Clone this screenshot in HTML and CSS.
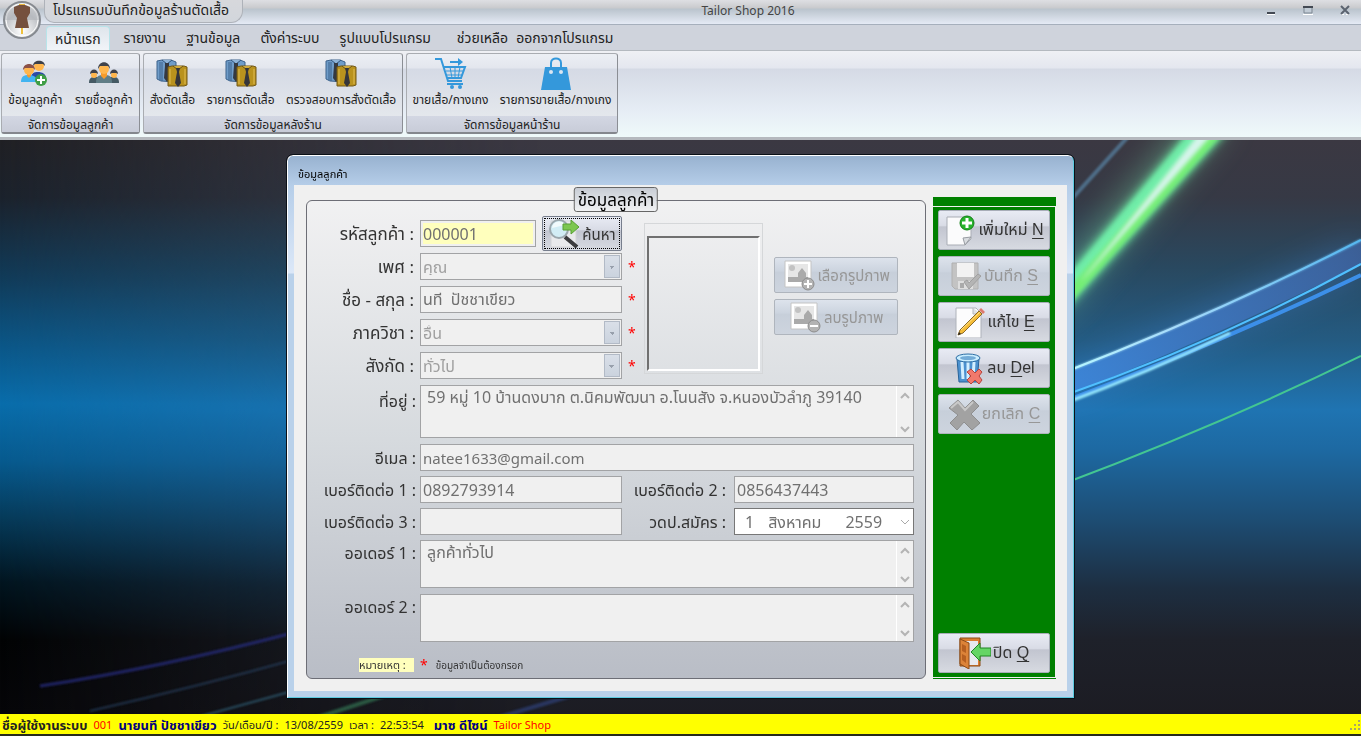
FILE: index.html
```html
<!DOCTYPE html>
<html lang="th">
<head>
<meta charset="utf-8">
<title>Tailor Shop 2016</title>
<link rel="stylesheet" href="styles.css">
</head>
<body>
<svg class="defs" aria-hidden="true">
  <symbol id="shirts" viewBox="0 0 32 32">
    <path d="M1 3l5-1h9l5 2v20l-15-1-4-2z" fill="#6f9cc9" stroke="#3c628c"/>
    <path d="M4 4v18M6 4v19" stroke="#3c628c"/>
    <path d="M6 2l5 4 5-4" fill="#8fb4d8" stroke="#31557c"/>
    <path d="M9 5h4v3l1 12-3 4-3-4 1-12z" fill="#353941"/>
    <path d="M12 9l4-1h12l3 1v18l-3 1H12z" fill="#b9921d" stroke="#725817"/>
    <path d="M14 11v15M29 11v15" stroke="#e0bc55"/>
    <path d="M17 8l5 4 5-4" fill="#d0aa3c" stroke="#6c5414"/>
    <path d="M20 10h4l-1 4 2 11-3 4-3-4 2-11z" fill="#35353a"/>
  </symbol>
  <symbol id="photo" viewBox="0 0 34 34">
    <path d="M3 3h26v26H3z" fill="#fff" stroke="#c4c4c4"/>
    <path d="M6 6h20v17H6z" fill="#e6e6e6"/><path d="M6 19h20v5H6z" fill="#aaa"/>
    <circle cx="10" cy="10" r="3" fill="#c2c2c2"/>
    <path d="M20 10l4 5v4h-3v3h-2v-3h-3v-4z" fill="#aaa"/>
    <circle cx="26" cy="26" r="6" fill="#b3b3b3" stroke="#8d8d8d"/>
  </symbol>
  <symbol id="up" viewBox="0 0 10 8"><path d="M1 6l4-4 4 4" fill="none" stroke="#b4b4b4" stroke-width="2"/></symbol>
  <symbol id="down" viewBox="0 0 10 8"><path d="M1 2l4 4 4-4" fill="none" stroke="#b4b4b4" stroke-width="2"/></symbol>
</svg>

<header class="titlebar">
  <span class="orb">
    <svg width="40" height="40" viewBox="0 0 40 40">
      <defs><radialGradient id="orbFill" cx=".5" cy=".8" r=".8"><stop offset="0" stop-color="#fff"/><stop offset=".6" stop-color="#c4c6ca"/><stop offset="1" stop-color="#efefef"/></radialGradient></defs>
      <circle cx="20" cy="20" r="18" fill="url(#orbFill)" stroke="#868a90" stroke-width="2"/>
      <circle cx="20" cy="20" r="16" fill="none" stroke="#fff"/>
      <path d="M3 20a17 15 0 0 1 34 0z" fill="#a9adb3" opacity=".5"/>
      <path d="M20 26v8" stroke="#efc13c" stroke-width="2"/>
      <path d="M17 4h6v2h-6z" fill="#e6b53c"/>
      <path d="M17 5h6l5 2v6l-3 5 2 10H13l2-10-3-5V7z" fill="#75503e"/>
    </svg>
  </span>
  <span class="app-name">โปรแกรมบันทึกข้อมูลร้านตัดเสื้อ</span>
  <h1 class="window-title">Tailor Shop 2016</h1>
  <div class="window-buttons">
    <button type="button" aria-label="Minimize"><svg width="10" height="12" viewBox="0 0 10 12"><path d="M1 10h8" stroke="#434953" stroke-width="2"/><path d="M1 11.500h8" stroke="#fff"/></svg></button>
    <button type="button" aria-label="Maximize"><svg width="10" height="12" viewBox="0 0 10 12"><path d="M1 4h8v6H1z" fill="#c2ccd6" stroke="#7c8792"/><path d="M0 4h10" stroke="#434953" stroke-width="2"/><path d="M0 11.500h10" stroke="#fff"/></svg></button>
    <button type="button" aria-label="Close"><svg width="10" height="12" viewBox="0 0 10 12"><path d="M1 11.500h3m2 0h3" stroke="#fff"/><path d="M1 3l8 8M9 3l-8 8" stroke="#5b636f" stroke-width="2"/></svg></button>
  </div>
</header>

<nav class="tabs">
  <a href="#home" class="tab active">หน้าแรก</a>
  <a href="#report" class="tab">รายงาน</a>
  <a href="#data" class="tab">ฐานข้อมูล</a>
  <a href="#setup" class="tab">ตั้งค่าระบบ</a>
  <a href="#style" class="tab">รูปแบบโปรแกรม</a>
  <a href="#help" class="tab help">ช่วยเหลือ</a>
  <a href="#exit" class="tab exit">ออกจากโปรแกรม</a>
</nav>

<section class="ribbon">
  <div class="group customers">
    <div class="tools">
      <button type="button" class="tool">
        <svg width="32" height="32" viewBox="0 0 32 32">
          <path d="M12 20c0-5 3-6 7-6s8 2 8 6z" fill="#2b4aa5"/><circle cx="20" cy="8" r="5" fill="#ffb64d"/><path d="M14 8c0-7 12-7 12 0l-2-2h-8z" fill="#3d4048"/>
          <path d="M2 24c0-6 3-7 8-7s8 2 8 7z" fill="#42b4f0"/><path d="M8 14h4v4l-2 2-2-2z" fill="#f59b2c"/><circle cx="10" cy="12" r="5" fill="#ffb64d"/><path d="M4 12c0-8 12-8 12 0l-2-2H6z" fill="#8b5148"/>
          <circle cx="22" cy="22" r="6" fill="#3f9e45"/><path d="M22 18v8m-4-4h8" stroke="#fff" stroke-width="2"/>
        </svg>
        <span>ข้อมูลลูกค้า</span>
      </button>
      <button type="button" class="tool">
        <svg width="32" height="32" viewBox="0 0 32 32">
          <path d="M1 25c0-5 2-6 6-6h18c4 0 6 1 6 6z" fill="#455a64"/><path d="M8 25c0-7 2-8 8-8s8 1 8 8z" fill="#607d86"/>
          <path d="M13 14h6v4l-3 3-3-3z" fill="#f59b2c"/><circle cx="16" cy="11" r="5" fill="#ffb64d"/><path d="M10 11c0-9 12-9 12 0l-2-3h-8z" fill="#41434a"/>
          <circle cx="6" cy="17" r="3" fill="#ffb64d"/><path d="M2 16c0-6 8-6 8 0l-2-1H4z" fill="#41434a"/><circle cx="26" cy="17" r="3" fill="#ffb64d"/><path d="M22 16c0-6 8-6 8 0l-2-1h-4z" fill="#41434a"/>
        </svg>
        <span>รายชื่อลูกค้า</span>
      </button>
    </div>
    <div class="caption">จัดการข้อมูลลูกค้า</div>
  </div>
  <div class="group backshop">
    <div class="tools">
      <button type="button" class="tool"><svg width="32" height="32"><use href="#shirts"/></svg><span>สั่งตัดเสื้อ</span></button>
      <button type="button" class="tool"><svg width="32" height="32"><use href="#shirts"/></svg><span>รายการตัดเสื้อ</span></button>
      <button type="button" class="tool"><svg width="32" height="32"><use href="#shirts"/></svg><span>ตรวจสอบการสั่งตัดเสื้อ</span></button>
    </div>
    <div class="caption">จัดการข้อมูลหลังร้าน</div>
  </div>
  <div class="group frontshop">
    <div class="tools">
      <button type="button" class="tool">
        <svg width="34" height="34" viewBox="0 0 34 34" fill="none" stroke="#3498db" stroke-width="2">
          <path d="M1 2h6l7 22h14"/><path d="M9 10h22l-4 11H13"/><path d="M12 14h17M12 18h16M16 10l2 11M21 10v11M26 10l-2 11" stroke-width="1"/><path d="M16 5h10" /><path d="M24 1l5 4-5 4z" fill="#3498db" stroke="none"/><path d="M13 27h16" /><circle cx="18" cy="30" r="2" fill="#3498db" stroke="none"/><circle cx="26" cy="30" r="2" fill="#3498db" stroke="none"/>
        </svg>
        <span>ขายเสื้อ/กางเกง</span>
      </button>
      <button type="button" class="tool">
        <svg width="34" height="34" viewBox="0 0 34 34"><path d="M6 10h22l4 23H2z" fill="#3498db"/><path d="M12 10V6c0-6 10-6 10 0v4" fill="none" stroke="#3498db" stroke-width="2"/><circle cx="12" cy="15" r="2" fill="#dbe6f2"/><circle cx="22" cy="15" r="2" fill="#dbe6f2"/></svg>
        <span>รายการขายเสื้อ/กางเกง</span>
      </button>
    </div>
    <div class="caption">จัดการข้อมูลหน้าร้าน</div>
  </div>
</section>

<main class="workspace">
  <svg class="wallpaper" viewBox="0 0 1361 574" preserveAspectRatio="none" aria-hidden="true">
    <defs>
      <linearGradient id="left" x2="0" y2="1"><stop offset="0" stop-color="#202024"/><stop offset=".1" stop-color="#1b222c"/><stop offset=".24" stop-color="#113b59"/><stop offset=".36" stop-color="#0b5788"/><stop offset=".46" stop-color="#096dab"/><stop offset=".56" stop-color="#075a8e"/><stop offset=".66" stop-color="#063a59"/><stop offset=".77" stop-color="#021520"/><stop offset=".87" stop-color="#020304"/><stop offset="1" stop-color="#060609"/></linearGradient>
      <linearGradient id="right" x2="0" y2="1"><stop offset="0" stop-color="#3b3842"/><stop offset=".1" stop-color="#363945"/><stop offset=".22" stop-color="#29485f"/><stop offset=".35" stop-color="#245b82"/><stop offset=".47" stop-color="#1f74b2"/><stop offset=".54" stop-color="#1d69a2"/><stop offset=".66" stop-color="#1d4d74"/><stop offset=".78" stop-color="#1d2e41"/><stop offset=".87" stop-color="#1e212a"/><stop offset="1" stop-color="#1c1c23"/></linearGradient>
      <linearGradient id="fade"><stop offset="0" stop-color="#000"/><stop offset=".22" stop-color="#aaa"/><stop offset=".4" stop-color="#fff"/></linearGradient>
      <mask id="toRight"><rect width="1361" height="574" fill="url(#fade)"/></mask>
      <linearGradient id="blueLine" gradientUnits="userSpaceOnUse" x1="1074" y1="0" x2="1361" y2="0"><stop offset="0" stop-color="#b6f6ff"/><stop offset=".35" stop-color="#a8dcfb"/><stop offset="1" stop-color="#55b7f0"/></linearGradient>
      <linearGradient id="band" gradientUnits="userSpaceOnUse" x1="1074" y1="0" x2="1361" y2="0"><stop offset="0" stop-color="#4189e0"/><stop offset="1" stop-color="#3f64a2"/></linearGradient>
      <filter id="soft" x="-20%" y="-20%" width="140%" height="140%"><feGaussianBlur stdDeviation="5"/></filter>
      <filter id="wide" x="-30%" y="-30%" width="160%" height="160%"><feGaussianBlur stdDeviation="16"/></filter>
      <filter id="fine" x="-10%" y="-10%" width="120%" height="120%"><feGaussianBlur stdDeviation="1"/></filter>
      <filter id="mid" x="-10%" y="-10%" width="120%" height="120%"><feGaussianBlur stdDeviation="2"/></filter>
    </defs>
    <rect width="1361" height="574" fill="url(#left)"/>
    <rect width="1361" height="574" fill="url(#right)" mask="url(#toRight)"/>
    <path d="M1050 140L1190-20h40L1050 185z" fill="#6bb48f" opacity=".6" filter="url(#wide)"/>
    <path d="M1134-10l-74 82" stroke="#5f93b8" stroke-width="4" opacity=".6" filter="url(#fine)"/>
    <path d="M1060 144L1190-10h38L1060 176z" fill="#6be9a2" filter="url(#soft)"/>
    <path d="M1060 147L1192-10h16L1060 166z" fill="#72f0ab" opacity=".8" filter="url(#mid)"/>
    <path d="M1060 158L1208-10h18L1060 174z" fill="#74ee74" filter="url(#mid)"/>
    <path d="M1080 142L1202-10h14l-128 144z" fill="#d6f4ec" filter="url(#mid)"/>
    <path d="M1060 234L1361 100v36L1060 266z" fill="#468bea" opacity=".3" filter="url(#wide)"/>
    <path d="M1060 234Q1220 172 1361 100v24Q1220 195 1060 258z" fill="url(#band)" opacity=".8"/>
    <path d="M1060 234Q1220 172 1361 100" fill="none" stroke="url(#blueLine)" stroke-width="2" filter="url(#fine)"/>
    <path d="M1060 234Q1220 172 1361 100" fill="none" stroke="url(#blueLine)" stroke-width="2"/>
    <path d="M1060 257Q1220 201 1361 124" fill="none" stroke="#4fc0ff" stroke-width="2"/>
    <path d="M1060 263Q1220 203 1361 135" fill="none" stroke="#3c8fe9" stroke-width="4"/>
    <path d="M1060 265Q1150 232 1230 193" fill="none" stroke="#9beeff" stroke-width="3" filter="url(#fine)"/>
    <path d="M1060 345Q1220 285 1361 216" fill="none" stroke="#43c692" stroke-width="2"/>
    <g fill="none" filter="url(#fine)"><path d="M40 546Q160 528 300 491" stroke="#29308a" stroke-width="3" opacity=".7"/><path d="M90 571Q200 546 300 518" stroke="#2a4565" stroke-width="2" opacity=".7"/><path d="M180 582L300 549" stroke="#356780" stroke-width="2" opacity=".7"/><path d="M310 580L420 544" stroke="#327452" stroke-width="4" opacity=".7"/><path d="M490 580L610 544" stroke="#31498a" stroke-width="4" opacity=".6"/></g>
  </svg>

  <section class="dialog">
    <h2 class="dialog-title">ข้อมูลลูกค้า</h2>
    <div class="dialog-body">
      <form class="groupbox">
        <h3 class="legend">ข้อมูลลูกค้า</h3>
        <div class="top">
          <div class="rows">
            <div class="row"><label for="code">รหัสลูกค้า :</label><input id="code" class="code" value="000001"><button type="button" class="btn search">
              <svg width="32" height="30" viewBox="0 0 32 30"><path d="M3 2h20l5 5v21H3z" fill="#e9eaec" stroke="#d3d4d7"/><circle cx="11" cy="10" r="9" fill="#d2edf5" stroke="#9ba7ad" stroke-width="2"/><path d="M4 9a7 7 0 0 1 13-3z" fill="#fff" opacity=".7"/><path d="M17 18l12 10" stroke="#3b3b3d" stroke-width="4"/><path d="M15 5h8V1l8 7-8 7v-4h-8z" fill="#7cc750" stroke="#58a035"/></svg>
              <span>ค้นหา</span></button></div>
            <div class="row"><label for="sex">เพศ :</label><select id="sex" disabled><option>คุณ</option></select><b class="req">*</b></div>
            <div class="row"><label for="name">ชื่อ - สกุล :</label><input id="name" value="นที&nbsp; ปัชชาเขียว"><b class="req">*</b></div>
            <div class="row"><label for="dept">ภาควิชา :</label><select id="dept" disabled><option>อื่น</option></select><b class="req">*</b></div>
            <div class="row"><label for="org">สังกัด :</label><select id="org" disabled><option>ทั่วไป</option></select><b class="req">*</b></div>
          </div>
          <div class="photo-frame"><div class="photo"></div></div>
          <div class="photo-actions">
            <button type="button" class="btn off" disabled><svg width="34" height="34" viewBox="0 0 34 34"><use href="#photo"/><path d="M26 22v8m-4-4h8" stroke="#fff" stroke-width="2"/></svg><span>เลือกรูปภาพ</span></button>
            <button type="button" class="btn off" disabled><svg width="34" height="34" viewBox="0 0 34 34"><use href="#photo"/><path d="M22 26h8" stroke="#fff" stroke-width="2"/></svg><span>ลบรูปภาพ</span></button>
          </div>
        </div>
        <div class="row area address"><label for="address">ที่อยู่ :</label><div class="memo"><textarea id="address">59 หมู่ 10 บ้านดงบาก ต.นิคมพัฒนา อ.โนนสัง จ.หนองบัวลำภู 39140</textarea><span class="scroll"><svg width="10" height="8"><use href="#up"/></svg><svg width="10" height="8"><use href="#down"/></svg></span></div></div>
        <div class="row"><label for="email">อีเมล :</label><input id="email" type="email" value="natee1633@gmail.com"></div>
        <div class="row pair"><label for="tel1">เบอร์ติดต่อ 1 :</label><input id="tel1" value="0892793914"><label for="tel2">เบอร์ติดต่อ 2 :</label><input id="tel2" value="0856437443"></div>
        <div class="row pair"><label for="tel3">เบอร์ติดต่อ 3 :</label><input id="tel3"><label for="joined">วดป.สมัคร :</label><button type="button" id="joined" class="date"><span>1</span><span>สิงหาคม</span><span class="year">2559</span><svg width="10" height="8" viewBox="0 0 10 8"><path d="M1 2l4 4 4-4" fill="none" stroke="#aaa"/></svg></button></div>
        <div class="row area"><label for="order1">ออเดอร์ 1 :</label><div class="memo"><textarea id="order1">ลูกค้าทั่วไป</textarea><span class="scroll"><svg width="10" height="8"><use href="#up"/></svg><svg width="10" height="8"><use href="#down"/></svg></span></div></div>
        <div class="row area"><label for="order2">ออเดอร์ 2 :</label><div class="memo"><textarea id="order2"></textarea><span class="scroll"><svg width="10" height="8"><use href="#up"/></svg><svg width="10" height="8"><use href="#down"/></svg></span></div></div>
        <p class="note"><mark>หมายเหตุ :</mark><b class="req">*</b><span>ข้อมูลจำเป็นต้องกรอก</span></p>
      </form>

      <aside class="side">
        <div class="actions">
          <button type="button" class="btn"><svg width="32" height="32" viewBox="0 0 32 32"><path d="M3 3h24v22l-6 6H3z" fill="#fbfbfc" stroke="#a9adb5"/><path d="M27 23l-8 1 2 7z" fill="#d9dce0" stroke="#989ca2"/><circle cx="23" cy="9" r="7" fill="#27b32c" stroke="#148119"/><path d="M23 4v10m-5-5h10" stroke="#fff" stroke-width="3"/></svg><span>เพิ่มใหม่ <u>N</u></span></button>
          <button type="button" class="btn off" disabled><svg width="32" height="32" viewBox="0 0 32 32"><path d="M2 3h26v26H5l-3-3z" fill="#c3c3c3" stroke="#b0b0b0"/><path d="M7 3h17v14H7z" fill="#f2f2f2"/><path d="M8 21h15v8H8z" fill="#dedede"/><path d="M10 23h4v5h-4z" fill="#aaa"/><path d="M14 22l5 7 12-13-3-2-9 9-2-3z" fill="#b4b4b4" stroke="#a0a0a0"/></svg><span>บันทึก <u>S</u></span></button>
          <button type="button" class="btn"><svg width="32" height="32" viewBox="0 0 32 32"><path d="M3 2h20l5 5v25H3z" fill="#fcfcfd" stroke="#aeb2ba"/><path d="M20 2v6h8" fill="#e1e3e6" stroke="#b5b8bd"/><path d="M5 29l2-5L26 5l3 3-19 19z" fill="#f4bb37" stroke="#8b6a28"/><path d="M8 24L27 6" stroke="#ffe48a"/><path d="M26 4l2-2 4 4-2 2z" fill="#dd796d"/><path d="M5 29l1-3 2 2z" fill="#222"/></svg><span>แก้ไข <u>E</u></span></button>
          <button type="button" class="btn"><svg width="32" height="32" viewBox="0 0 32 32"><path d="M4 7h22l-2 23H6z" fill="#4c91cf" stroke="#286399"/><path d="M9 10l1 17M15 10v17M21 10l-1 17" stroke="#d3efff" stroke-width="3"/><ellipse cx="15" cy="6" rx="12" ry="4" fill="#c9edff" stroke="#2d6ea5"/><ellipse cx="15" cy="6" rx="8" ry="2" fill="#73abd7"/><path d="M14 20l4-3 4 4 4-4 3 3-3 4 3 4-3 4-4-4-4 4-4-4 4-4z" fill="#f1796c" stroke="#b9443e"/></svg><span>ลบ <u>D</u>el</span></button>
          <button type="button" class="btn off" disabled><svg width="32" height="32" viewBox="0 0 32 32"><path d="M1 10l9-8 7 8 8-8 6 6-8 8 9 9-8 7-8-8-7 8-7-7 8-8z" fill="#a2a2a2" stroke="#8e8e8e"/><path d="M3 10l7-6 7 8 8-8" fill="none" stroke="#c9c9c9" stroke-width="2"/></svg><span>ยกเลิก <u>C</u></span></button>
          <button type="button" class="btn close"><svg width="32" height="32" viewBox="0 0 32 32"><path d="M1 1h20v28H1z" fill="#dd7e31" stroke="#8a4a16"/><path d="M4 4h15v24H4z" fill="#e8e9ee"/><path d="M1 2l9 4v26l-9-5z" fill="#dc8338" stroke="#8a4a16"/><path d="M3 7l4 2v7l-4-2zM3 17l4 2v7l-4-3z" fill="#b65f20"/><path d="M12 15l9-9v5h11v8H21v5z" fill="#65d565" stroke="#218625"/></svg><span>ปิด <u>Q</u></span></button>
        </div>
      </aside>
    </div>
  </section>
</main>

<footer class="status">
  <strong>ชื่อผู้ใช้งานระบบ</strong><span class="red">001</span><strong class="navy">นายนที ปัชชาเขียว</strong><span>วัน/เดือน/ปี :</span><span>13/08/2559</span><span>เวลา :</span><span>22:53:54</span><strong class="navy designer">มาซ ดีไซน์</strong><span class="red">Tailor Shop</span>
  <svg class="grip" width="12" height="12" viewBox="0 0 12 12" fill="#a9a56a"><path d="M9 1h2v2H9zM9 5h2v2H9zM5 5h2v2H5zM9 9h2v2H9zM5 9h2v2H5zM1 9h2v2H1z"/></svg>
</footer>
</body>
</html>
```
FILE: styles.css
```css
* { box-sizing: border-box; }
html, body { height: 100%; }
body {
  margin: 0;
  display: flex;
  flex-direction: column;
  min-height: 100vh;
  font: 12px/16px "Noto Sans", "Noto Sans Thai", sans-serif;
  color: #222;
  background: #1c1c23;
}
button, input, select, textarea { font: inherit; color: inherit; margin: 0; }
h1, h2, h3, p { margin: 0; font-weight: 400; }
.defs { position: absolute; width: 0; height: 0; }

/* Title bar */
.titlebar {
  position: relative;
  display: flex;
  align-items: center;
  height: 25px;
  padding-left: 44px;
  background: linear-gradient(#dedfe3, #c9cacd 8px, #bac4cd 9px, #e5eaf5 24px);
  border-bottom: 1px solid #a6afbc;
}
.orb { position: absolute; left: 2px; top: 0; z-index: 2; height: 40px; }
.app-name {
  align-self: stretch;
  padding: 0 13px 0 8px;
  font-size: 14px;
  line-height: 20px;
  height: 23px;
  border: 1px solid #aeb2b9;
  border-top: 0;
  border-radius: 0 0 12px 10px;
  background: linear-gradient(#d7d8dc, #d2d6dc);
}
.window-title { position: absolute; left: 0; right: 0; top: 3px; padding-left: 135px; text-align: center; font-size: 12px; color: #444; pointer-events: none; }
.window-buttons { margin-left: auto; display: flex; gap: 27px; padding: 0 11px 7px 0; }
.window-buttons button { display: flex; padding: 0; border: 0; background: none; }

/* Tabs */
.tabs {
  display: flex;
  align-items: flex-end;
  height: 26px;
  padding-left: 46px;
  background: #cfd3dc;
  border-bottom: 1px solid #b4b9bf;
}
.tab { padding: 0 10px; height: 24px; line-height: 24px; font-size: 14px; color: #222; text-decoration: none; white-space: nowrap; }
.tab.active { margin-right: 4px; padding: 0 8px; background: linear-gradient(#dfe5ec, #f1f4f8); border: 1px solid #b8e4ea; border-bottom: 0; border-radius: 4px 4px 0 0; }
.tab.help { padding: 0 4px 0 16px; }
.tab.exit { padding: 0 4px; }

/* Ribbon */
.ribbon {
  display: flex;
  gap: 3px;
  height: 89px;
  padding: 2px 1px 3px;
  background: linear-gradient(#eff0f4, #e4e7ef 17px, #d5dae5 18px, #e6edf5 60px, #effafa 86px);
  border-bottom: 3px solid #b5b9be;
}
.group { display: flex; flex-direction: column; height: 81px; border: 1px solid #a9acb1; border-right-color: #8b8e94; border-bottom: 2px solid #84878d; border-radius: 3px; background: linear-gradient(#eceff4, #e3e6ee 14px, #d5dae5 15px, #e9ecef); }
.customers { width: 139px; }
.backshop { width: 260px; }
.frontshop { width: 212px; }
.tools { flex: 1; display: flex; justify-content: space-around; }
.tool { display: flex; flex-direction: column; align-items: center; padding: 3px 0 0; border: 0; background: none; font-size: 12px; line-height: 18px; white-space: nowrap; }
.tool svg { height: 34px; }
.caption { height: 16px; font-size: 12px; line-height: 18px; text-align: center; background: linear-gradient(#d3d7e3, #c8ccd8); }

/* Desktop */
.workspace { position: relative; flex: 1; display: flex; justify-content: center; align-items: flex-start; padding-top: 15px; overflow: hidden; }
.wallpaper { position: absolute; left: 0; top: 0; width: 100%; height: 100%; }
.dialog {
  position: relative;
  width: 100%;
  max-width: 787px;
  padding: 0 6px 6px;
  border: 1px solid #fff;
  border-right-color: #5ccbe0;
  border-bottom-color: #5ccbe0;
  border-radius: 6px 6px 0 0;
  outline: 1px solid #0b1118;
  background: linear-gradient(#98b2d0, #b6cee9 30px, #dce8f8 117px, #b9d1ea 118px);
}
.dialog-title { height: 29px; padding: 10px 4px 0; font-size: 11px; line-height: 16px; color: #000; }
.dialog-body { display: flex; gap: 7px; padding: 12px 11px 12px 12px; background: #f0f0f0; }

.groupbox {
  flex: 1;
  min-width: 0;
  position: relative;
  margin-top: 3px;
  padding: 14px 11px 6px 14px;
  border: 1px solid #6d6e76;
  border-radius: 6px;
  background: linear-gradient(#f1f1f2, #d6dade 50%, #b9bdc6);
  display: flex;
  flex-direction: column;
  gap: 5px;
  font-size: 16px;
  color: #333;
}
.legend { position: absolute; left: 50%; top: -14px; transform: translateX(-50%); padding: 0 3px; border: 1px solid #666; border-radius: 3px; background: linear-gradient(#c8cdd5, #f0f1f3); color: #000; font-size: 17px; line-height: 23px; white-space: nowrap; }
.top { display: flex; }
.rows { display: flex; flex-direction: column; gap: 6px; padding: 5px 0 1px; }
.row { display: flex; align-items: center; height: 27px; }
.row label { width: 95px; margin-right: 4px; flex: none; text-align: right; white-space: nowrap; line-height: 24px; }
.rows label { width: 93px; margin-right: 6px; font-size: 17px; }
.row input, .row select, .memo, .date { border: 1px solid #a2a3a5; border-radius: 0; background: #f0f0f0; color: #707070; height: 27px; }
.row input { flex: 1; min-width: 0; padding: 0 2px; }
.row input[type="email"] { font-size: 15px; }
.rows input, .rows select { flex: none; width: 202px; }
.rows .code { width: 116px; margin-right: 6px; background: #ffffbd; border: 1px solid #a2a3a5; box-shadow: inset 0 0 0 2px #f0f0f0; }
.row select {
  appearance: none;
  opacity: 1;
  padding: 0 2px;
  color: #a0a0a0;
  background:
    linear-gradient(to bottom left, #98a0ac 50%, transparent 50%) right 9px top 12px / 3px 3px no-repeat,
    linear-gradient(to bottom right, #98a0ac 50%, transparent 50%) right 6px top 12px / 3px 3px no-repeat,
    linear-gradient(#d9dfe8, #cbd3de) right 2px top 2px / 14px 21px no-repeat,
    linear-gradient(#b2bac6, #b2bac6) right 1px top 1px / 16px 23px no-repeat,
    #f0f0f0;
}
.req { color: #f00; font-size: 14px; font-weight: 400; margin-left: 6px; }

.btn { display: flex; align-items: center; justify-content: center; gap: 2px; padding: 0 2px; border: 1px solid #a8adb8; border-radius: 2px; background: linear-gradient(#e8ebf4, #d9dce6 38%, #c2c5d0 42%, #d7dae1); color: #333; white-space: nowrap; }
.btn.off { background: linear-gradient(#dde3ec, #ccd4df 38%, #c7cfda 42%, #cdd4de); color: #979797; border-color: #afb5bd; }
.search { width: 80px; height: 35px; border: 1px solid #777e8d; outline: 1px dotted #000; outline-offset: -3px; font-size: 15px; }
.photo-frame { margin: 8px 0 0 8px; width: 119px; height: 151px; padding: 12px 2px 2px; border: 1px solid #d5d7d9; }
.photo { height: 100%; border: 2px solid; border-color: #707070 #fff #fff #707070; }
.photo-actions { display: flex; flex-direction: column; gap: 6px; margin: 42px 0 0 11px; }
.photo-actions .btn { width: 124px; height: 36px; font-size: 15px; }

.row.area { height: 48px; margin-bottom: 1px; align-items: flex-start; }
.row.area.address { height: 53px; }
.area label { padding-top: 1px; }
.address label { padding-top: 4px; }
.memo { flex: 1; min-width: 0; display: flex; height: 100%; }
.memo textarea { flex: 1; min-width: 0; border: 0; padding: 0 6px; resize: none; background: none; font-size: 16px; line-height: 22px; overflow: hidden; }
.scroll { display: flex; flex-direction: column; justify-content: space-between; align-items: center; width: 17px; padding: 6px 0 4px; border-left: 1px solid #fff; }
.pair > input, .pair > .date { flex: 1; }
.pair input:first-of-type { flex: none; width: 202px; }
.pair label + input + label { width: 104px; margin-right: 8px; }
.date { display: flex; align-items: center; gap: 14px; padding: 0 3px 0 10px; background: #fff; border-color: #777; }
.date .year { padding-left: 10px; }
.date svg { margin-left: auto; }
.note { display: flex; align-items: center; gap: 3px; padding: 10px 0 0 38px; font-size: 10px; line-height: 14px; }
.note mark { width: 55px; background: #ffffbd; color: #333; font-size: 11px; }
.note .req { margin-left: 3px; }
.note span { padding-left: 5px; }

/* Action panel */
.side { width: 123px; flex: none; display: flex; flex-direction: column; border-top: 9px solid #008000; border-bottom: 1px solid #008000; padding: 1px 1px 1px 0; }
.actions { flex: 1; display: flex; flex-direction: column; gap: 6px; padding: 3px 5px 4px; background: #008000; }
.actions .btn { height: 40px; font-family: "Liberation Sans", "Noto Sans Thai", sans-serif; font-size: 16px; }
.actions .close { margin-top: auto; }
.actions u { text-underline-offset: 3px; text-decoration-thickness: 1px; }

/* Status bar */
.status { display: flex; align-items: center; gap: 6px; height: 22px; padding: 2px 0 0 2px; background: #ff0; border-bottom: 2px solid #262b1c; font-size: 11px; color: #222; white-space: nowrap; }
.status strong { font-size: 13px; }
.red { color: #f00; }
.navy { color: #000080; }
.designer { padding-left: 4px; }
.grip { margin-left: auto; }
```
